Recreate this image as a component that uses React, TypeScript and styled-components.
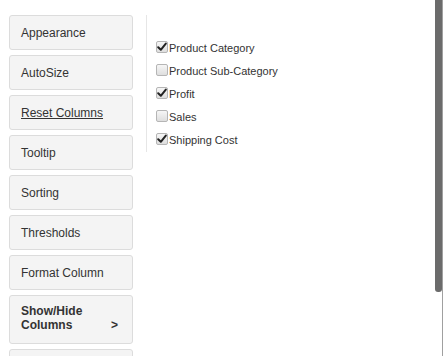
import React from "react";
import styled, { createGlobalStyle } from "styled-components";

const Global = createGlobalStyle`
  html, body { margin: 0; padding: 0; background: #fff; }
  body { font-family: Arial, "Liberation Sans", sans-serif; color: #333; width: 443px; height: 356px; overflow: hidden; }
`;

const Page = styled.div`
  position: relative;
  width: 443px;
  height: 356px;
  display: flex;
  align-items: flex-start;
  overflow: hidden;
`;

const Menu = styled.div`
  display: flex;
  flex-direction: column;
  gap: 5px;
  padding: 15px 0 0 9px;
  width: 124px;
  flex-shrink: 0;
`;

const MenuButton = styled.div<{ $tall?: boolean; $underline?: boolean; $bold?: boolean }>`
  box-sizing: border-box;
  height: ${(p) => (p.$tall ? 49 : 35)}px;
  border: 1px solid #dcdcdc;
  border-radius: 3px;
  background: #f4f4f4;
  display: flex;
  align-items: ${(p) => (p.$tall ? "flex-end" : "center")};
  justify-content: space-between;
  padding: ${(p) => (p.$tall ? "0 14px 11px 11px" : "0 11px")};
  font-size: 12px;
  line-height: 14px;
  font-weight: ${(p) => (p.$bold ? "bold" : "normal")};
  text-decoration: ${(p) => (p.$underline ? "underline" : "none")};
  color: #333;
  flex-shrink: 0;
`;

const WrapLabel = styled.span`
  width: 70px;
`;

const Arrow = styled.span`
  font-weight: bold;
`;

const Divider = styled.div`
  width: 1px;
  height: 137px;
  background: #e6e6e6;
  margin: 15px 0 0 13px;
  flex-shrink: 0;
`;

const List = styled.div`
  display: flex;
  flex-direction: column;
  padding: 36px 0 0 9px;
`;

const Row = styled.label`
  display: flex;
  align-items: center;
  height: 23px;
  font-size: 11px;
  color: #333;
`;

const Box = styled.span<{ $checked?: boolean }>`
  box-sizing: border-box;
  width: 12px;
  height: 12px;
  border: 1px solid #b5b5b5;
  border-radius: 2px;
  background: linear-gradient(#f6f6f6, #dedede);
  display: flex;
  align-items: center;
  justify-content: center;
  margin-right: 1px;
  flex-shrink: 0;
  position: relative;
  top: -1px;
`;

const Check = () => (
  <svg width="10" height="10" viewBox="0 0 10 10">
    <path d="M1.2 5.2 L3.8 7.8 L8.8 1.6" fill="none" stroke="#222" strokeWidth="2" strokeLinecap="round" strokeLinejoin="round" />
  </svg>
);

const Scrollbar = styled.div`
  position: absolute;
  top: 0;
  left: 435px;
  width: 7px;
  height: 292px;
  background: #6b6b6b;
  border-radius: 0 0 3px 3px;
`;

const EdgeLine = styled.div`
  position: absolute;
  top: 0;
  left: 442px;
  width: 1px;
  height: 356px;
  background: #a0a0a0;
`;

const items = ["Appearance", "AutoSize", "Reset Columns", "Tooltip", "Sorting", "Thresholds", "Format Column"];

const columns = [
  { name: "Product Category", checked: true },
  { name: "Product Sub-Category", checked: false },
  { name: "Profit", checked: true },
  { name: "Sales", checked: false },
  { name: "Shipping Cost", checked: true },
];

export default function App() {
  return (
    <>
      <Global />
      <Page>
        <Menu>
          {items.map((it) => (
            <MenuButton key={it} $underline={it === "Reset Columns"}>
              {it}
            </MenuButton>
          ))}
          <MenuButton $tall $bold>
            <WrapLabel>Show/Hide Columns</WrapLabel>
            <Arrow>&gt;</Arrow>
          </MenuButton>
          <MenuButton> </MenuButton>
        </Menu>
        <Divider />
        <List>
          {columns.map((c) => (
            <Row key={c.name}>
              <Box $checked={c.checked}>{c.checked && <Check />}</Box>
              {c.name}
            </Row>
          ))}
        </List>
        <Scrollbar />
        <EdgeLine />
      </Page>
    </>
  );
}
